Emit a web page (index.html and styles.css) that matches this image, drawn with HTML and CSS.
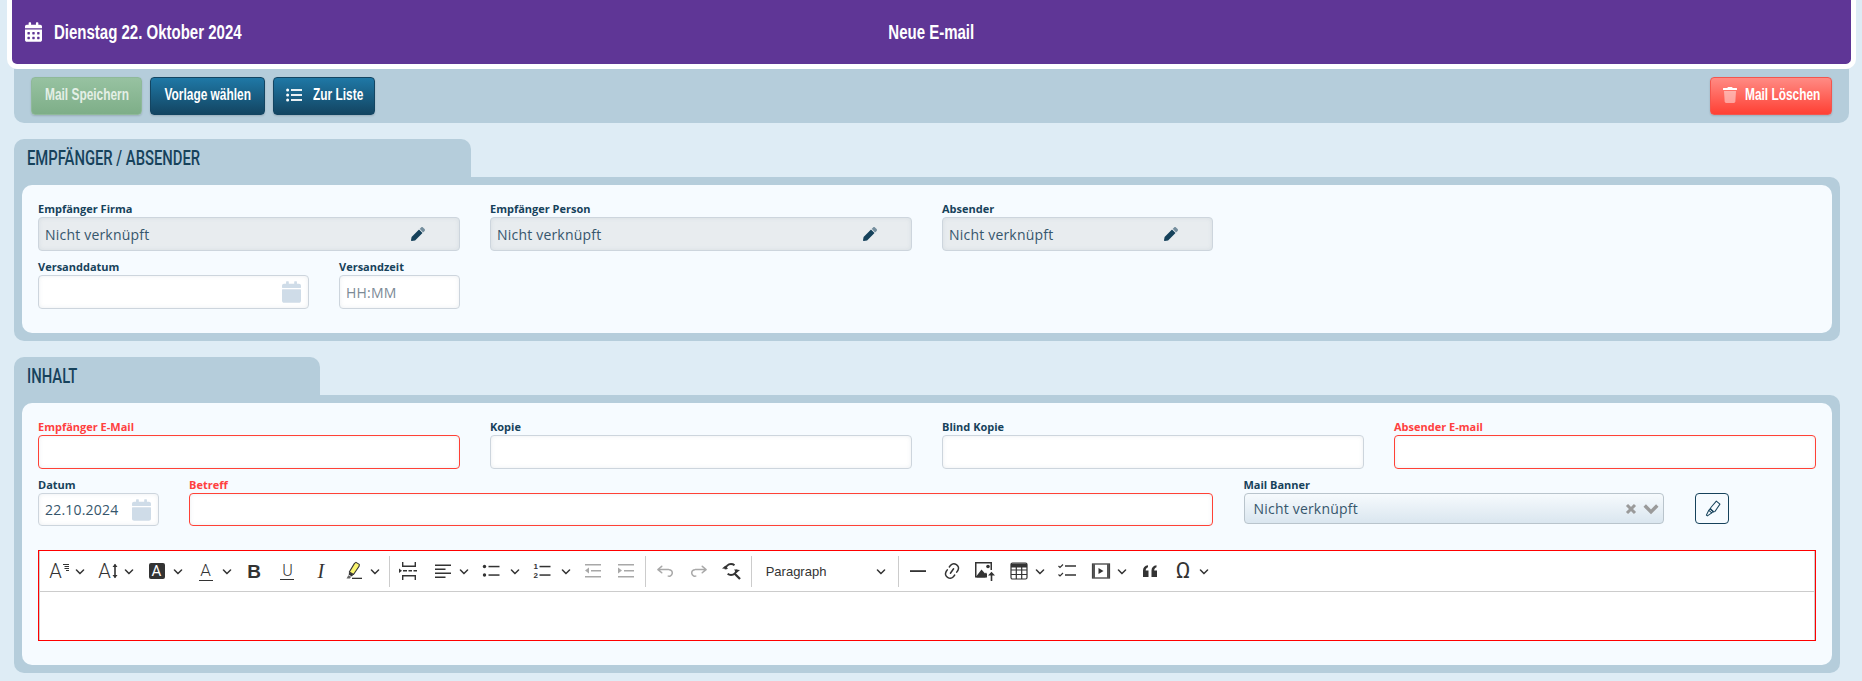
FILE: index.html
```html
<!DOCTYPE html>
<html lang="de">
<head>
    <meta charset="UTF-8">
    <meta name="viewport" content="width=device-width, initial-scale=1.0">
    <title>Neue E-mail</title>
    <link rel="stylesheet" href="styles.css">
</head>
<body>
    <svg class="defs" aria-hidden="true">
        <symbol id="i-chev" viewBox="0 0 10 10"><path d="M.941 4.523a.75.75 0 1 1 1.06-1.06l3.006 3.005 3.005-3.005a.75.75 0 1 1 1.06 1.06l-3.549 3.55a.75.75 0 0 1-1.168-.136L.941 4.523z"/></symbol>
        <symbol id="i-cal" viewBox="0 0 448 512"><path d="M12 192h424c6.6 0 12 5.4 12 12v260c0 26.5-21.5 48-48 48H48c-26.5 0-48-21.5-48-48V204c0-6.6 5.4-12 12-12zm436-44v-36c0-26.5-21.5-48-48-48h-48V12c0-6.6-5.4-12-12-12h-40c-6.6 0-12 5.4-12 12v52H160V12c0-6.6-5.4-12-12-12h-40c-6.6 0-12 5.4-12 12v52H48C21.5 64 0 85.5 0 112v36c0 6.6 5.4 12 12 12h424c6.6 0 12-5.4 12-12z"/></symbol>
        <symbol id="i-pencil" viewBox="0 0 512 512"><path d="M497.9 142.1l-46.1 46.1c-4.7 4.7-12.3 4.7-17 0l-111-111c-4.7-4.7-4.7-12.3 0-17l46.1-46.1c18.7-18.7 49.1-18.7 67.9 0l60.1 60.1c18.8 18.7 18.8 49.1 0 67.9z" opacity=".55"/><path d="M284.2 99.8L21.6 362.4.4 483.9c-2.9 16.4 11.4 30.6 27.8 27.8l121.5-21.3 262.6-262.6c4.7-4.7 4.7-12.3 0-17l-111-111c-4.8-4.7-12.4-4.7-17.1 0z"/></symbol>
    </svg>

    <header class="top-bar">
        <div class="top-date">
            <svg class="top-icon" viewBox="0 0 448 512"><path fill="currentColor" d="M0 464c0 26.5 21.5 48 48 48h352c26.5 0 48-21.5 48-48V192H0v272zm320-196c0-6.6 5.4-12 12-12h40c6.6 0 12 5.4 12 12v40c0 6.6-5.4 12-12 12h-40c-6.6 0-12-5.4-12-12v-40zm0 128c0-6.6 5.4-12 12-12h40c6.6 0 12 5.4 12 12v40c0 6.6-5.4 12-12 12h-40c-6.6 0-12-5.4-12-12v-40zM192 268c0-6.6 5.4-12 12-12h40c6.6 0 12 5.4 12 12v40c0 6.6-5.4 12-12 12h-40c-6.6 0-12-5.4-12-12v-40zm0 128c0-6.6 5.4-12 12-12h40c6.6 0 12 5.4 12 12v40c0 6.6-5.4 12-12 12h-40c-6.6 0-12-5.4-12-12v-40zM64 268c0-6.6 5.4-12 12-12h40c6.6 0 12 5.4 12 12v40c0 6.6-5.4 12-12 12H76c-6.6 0-12-5.4-12-12v-40zm0 128c0-6.6 5.4-12 12-12h40c6.6 0 12 5.4 12 12v40c0 6.6-5.4 12-12 12H76c-6.6 0-12-5.4-12-12v-40zM400 64h-48V16c0-8.8-7.2-16-16-16h-32c-8.8 0-16 7.2-16 16v48H160V16c0-8.8-7.2-16-16-16h-32c-8.8 0-16 7.2-16 16v48H48C21.5 64 0 85.5 0 112v48h448v-48c0-26.5-21.5-48-48-48z"/></svg>
            <span class="cond cond-top">Dienstag 22. Oktober 2024</span>
        </div>
        <div class="top-title"><span class="cond cond-top cond-mid">Neue E-mail</span></div>
    </header>

    <div class="page">
        <div class="action-bar">
            <button class="btn btn-save"><span class="cond cond-btn cond-mid">Mail Speichern</span></button>
            <button class="btn btn-blue btn-template"><span class="cond cond-btn cond-mid">Vorlage wählen</span></button>
            <button class="btn btn-blue btn-list">
                <svg class="btn-icon" viewBox="0 0 16 14" fill="currentColor"><circle cx="1.6" cy="2" r="1.5"/><circle cx="1.6" cy="7" r="1.5"/><circle cx="1.6" cy="12" r="1.5"/><rect x="5" y="1.1" width="11" height="1.8"/><rect x="5" y="6.1" width="11" height="1.8"/><rect x="5" y="11.1" width="11" height="1.8"/></svg>
                <span class="cond cond-btn">Zur Liste</span>
            </button>
            <button class="btn btn-red">
                <svg class="btn-icon btn-icon-trash" viewBox="0 0 448 512" fill="currentColor"><path d="M432 32H312l-9.4-18.7A24 24 0 0 0 281.1 0H166.8a23.72 23.72 0 0 0-21.4 13.3L136 32H16A16 16 0 0 0 0 48v32a16 16 0 0 0 16 16h416a16 16 0 0 0 16-16V48a16 16 0 0 0-16-16z"/><path opacity=".45" d="M53.2 467a48 48 0 0 0 47.9 45h245.8a48 48 0 0 0 47.9-45L416 128H32z"/></svg>
                <span class="cond cond-btn">Mail Löschen</span>
            </button>
        </div>

        <section class="section">
            <h2 class="tab tab-wide"><span class="cond cond-tab">EMPFÄNGER / ABSENDER</span></h2>
            <div class="panel">
                <div class="panel-inner">
                    <div class="grid-four">
                        <div class="field">
                            <label>Empfänger Firma</label>
                            <div class="input input-locked"><span class="input-text">Nicht verknüpft</span><svg class="pencil"><use href="#i-pencil"/></svg></div>
                        </div>
                        <div class="field">
                            <label>Empfänger Person</label>
                            <div class="input input-locked"><span class="input-text">Nicht verknüpft</span><svg class="pencil"><use href="#i-pencil"/></svg></div>
                        </div>
                        <div class="field field-sender">
                            <label>Absender</label>
                            <div class="input input-locked"><span class="input-text">Nicht verknüpft</span><svg class="pencil"><use href="#i-pencil"/></svg></div>
                        </div>
                    </div>
                    <div class="row-ship">
                        <div class="field">
                            <label>Versanddatum</label>
                            <div class="input"><span class="input-text"></span><svg class="cal"><use href="#i-cal"/></svg></div>
                        </div>
                        <div class="field">
                            <label>Versandzeit</label>
                            <div class="input"><span class="input-text input-hint">HH:MM</span></div>
                        </div>
                    </div>
                </div>
            </div>
        </section>

        <section class="section">
            <h2 class="tab tab-narrow"><span class="cond cond-tab">INHALT</span></h2>
            <div class="panel">
                <div class="panel-inner">
                    <div class="grid-four">
                        <div class="field field-req">
                            <label>Empfänger E-Mail</label>
                            <div class="input"></div>
                        </div>
                        <div class="field">
                            <label>Kopie</label>
                            <div class="input"></div>
                        </div>
                        <div class="field">
                            <label>Blind Kopie</label>
                            <div class="input"></div>
                        </div>
                        <div class="field field-req">
                            <label>Absender E-mail</label>
                            <div class="input"></div>
                        </div>
                    </div>
                    <div class="row-subject">
                        <div class="field field-date">
                            <label>Datum</label>
                            <div class="input input-short"><span class="input-text">22.10.2024</span><svg class="cal cal-date"><use href="#i-cal"/></svg></div>
                        </div>
                        <div class="field field-req field-subject">
                            <label>Betreff</label>
                            <div class="input input-short"></div>
                        </div>
                        <div class="field field-banner">
                            <label>Mail Banner</label>
                            <div class="select">
                                <span class="input-text">Nicht verknüpft</span>
                                <svg class="select-x" viewBox="0 0 12 12"><path d="M2 2l8 8M10 2l-8 8" stroke="currentColor" stroke-width="3" fill="none"/></svg>
                                <svg class="select-chev" viewBox="0 0 14 10"><path d="M1.5 2l5.5 5.5L12.5 2" stroke="currentColor" stroke-width="3" fill="none"/></svg>
                            </div>
                        </div>
                        <button class="pen-btn">
                            <svg viewBox="0 0 16 16" fill="none" stroke="currentColor" stroke-width=".95" stroke-linejoin="round"><path d="M11.6 1l3.4 2.900-4.600 6.800-1.400.6-2.900-2.500.2-1.500z"/><path d="M5.900 8.100l2.900 2.500-1.500 1.500-2.800-2.400z"/><path d="M4.500 9.700L2.200 14.300l1 .7 4.100-2.900"/></svg>
                        </button>
                    </div>

                    <div class="editor">
                        <div class="ed-toolbar">
                            <span class="tb tb-dd">
                                <span class="glyph-box"><span class="glyph glyph-a">A</span><svg class="glyph-lines" viewBox="0 0 7 7"><path d="M1 .5h6M2.500 2.500h4.500M2.500 4.500h4.500M4 6.500h3" stroke="#333" stroke-width="1"/></svg></span>
                                <svg class="chev"><use href="#i-chev"/></svg>
                            </span>
                            <span class="tb tb-dd">
                                <span class="glyph-box"><span class="glyph glyph-a">A</span><svg class="glyph-arrow" viewBox="0 0 6 16"><path d="M3 1.500v13" stroke="#333" stroke-width="1.600"/><path d="M0.500 4L3 0.800 5.500 4zM0.500 12L3 15.200 5.500 12z" fill="#333"/></svg></span>
                                <svg class="chev"><use href="#i-chev"/></svg>
                            </span>
                            <span class="tb tb-dd">
                                <span class="glyph glyph-fill">A</span>
                                <svg class="chev"><use href="#i-chev"/></svg>
                            </span>
                            <span class="tb tb-dd">
                                <span class="glyph glyph-under">A</span>
                                <svg class="chev"><use href="#i-chev"/></svg>
                            </span>
                            <span class="tb"><span class="glyph glyph-bold">B</span></span>
                            <span class="tb"><span class="glyph glyph-u">U</span></span>
                            <span class="tb"><span class="glyph glyph-i">I</span></span>
                            <span class="tb tb-dd">
                                <svg class="ico" viewBox="0 0 20 20"><path d="M9.500 13.500L5.300 11l5.200-8.600 1.500-1 3.300 2-.2 1.800z" fill="#f9f46e" stroke="#333" stroke-width="1.100" stroke-linejoin="round"/><path d="M5.200 11.200l4.200 2.500-1.600 1.700-3.200-1.900z" fill="#333"/><path d="M4.400 14.200L2.500 17.500l3.400.1 1.200-1.800z" fill="#666"/><rect x="8" y="16.700" width="10" height="1.300" fill="#333"/></svg>
                                <svg class="chev"><use href="#i-chev"/></svg>
                            </span>
                            <span class="tb-sep"></span>
                            <span class="tb">
                                <svg class="ico" viewBox="0 0 20 20" fill="#333"><path d="M3 1v5h14V1h-1.400v3.600H4.400V1zM3 19v-5h14v5h-1.400v-3.600H4.400V19z"/><path d="M4 9h4v1.400H4zm5.500 0h3.500v1.400H9.500zm5 0h3.500v1.400h-3.500zM0 7.500l3 2.300-3 2.300z"/></svg>
                            </span>
                            <span class="tb tb-dd tb-wide">
                                <svg class="ico" viewBox="0 0 20 20" fill="#333"><rect x="2" y="3.500" width="16" height="1.500"/><rect x="2" y="7.500" width="10.500" height="1.500"/><rect x="2" y="11.500" width="16" height="1.500"/><rect x="2" y="15.500" width="10.500" height="1.500"/></svg>
                                <svg class="chev"><use href="#i-chev"/></svg>
                            </span>
                            <span class="tb tb-dd tb-split">
                                <svg class="ico" viewBox="0 0 20 20" fill="#333"><circle cx="3.500" cy="5.500" r="1.700"/><circle cx="3.500" cy="14" r="1.700"/><rect x="7.500" y="4.800" width="11" height="1.500"/><rect x="7.500" y="13.300" width="11" height="1.500"/></svg>
                                <svg class="chev"><use href="#i-chev"/></svg>
                            </span>
                            <span class="tb tb-dd tb-split">
                                <svg class="ico" viewBox="0 0 20 20" fill="#333"><text x="1.500" y="7.500" class="ico-digit">1</text><text x="1.500" y="17" class="ico-digit">2</text><rect x="7.500" y="4.800" width="11" height="1.500"/><rect x="7.500" y="13.300" width="11" height="1.500"/></svg>
                                <svg class="chev"><use href="#i-chev"/></svg>
                            </span>
                            <span class="tb tb-off">
                                <svg class="ico" viewBox="0 0 20 20" fill="#333"><rect x="2" y="3" width="16" height="1.500"/><rect x="8" y="9" width="10" height="1.500"/><rect x="2" y="15" width="16" height="1.500"/><path d="M6 6.500v6L2 9.500z"/></svg>
                            </span>
                            <span class="tb tb-off">
                                <svg class="ico" viewBox="0 0 20 20" fill="#333"><rect x="2" y="3" width="16" height="1.500"/><rect x="8" y="9" width="10" height="1.500"/><rect x="2" y="15" width="16" height="1.500"/><path d="M2 6.500v6l4-3z"/></svg>
                            </span>
                            <span class="tb-sep"></span>
                            <span class="tb tb-off">
                                <svg class="ico" viewBox="0 0 20 20" fill="#333"><path d="m5.042 9.367 2.189 1.837a.75.75 0 0 1-.965 1.149l-3.788-3.18a.747.747 0 0 1-.21-.284.75.75 0 0 1 .17-.945L6.23 4.762a.75.75 0 1 1 .964 1.15L4.863 7.867h8.917A.75.75 0 0 1 14 7.9a4 4 0 1 1-1.477 7.718l.344-1.489a2.5 2.5 0 1 0 1.094-4.730l.008-.032H5.042z"/></svg>
                            </span>
                            <span class="tb tb-off">
                                <svg class="ico" viewBox="0 0 20 20" fill="#333"><path d="m14.958 9.367-2.189 1.837a.75.75 0 0 0 .965 1.149l3.788-3.180a.747.747 0 0 0 .21-.284.75.75 0 0 0-.17-.945L13.770 4.762a.75.75 0 1 0-.964 1.150l2.331 1.955H6.220A.75.75 0 0 0 6 7.900a4 4 0 1 0 1.477 7.718l-.344-1.489A2.500 2.500 0 1 1 6.039 9.400l-.008-.032h8.927z"/></svg>
                            </span>
                            <span class="tb">
                                <svg class="ico" viewBox="0 0 20 20"><circle cx="9" cy="8.500" r="5.500" fill="none" stroke="#333" stroke-width="1.900" stroke-dasharray="12 5"/><path d="M12.500 12.500l5.500 5.500" stroke="#333" stroke-width="2.300"/><path d="M0 7.500l3.500-3 2.500 3.500zM18 9l-3.500 3-2.500-3.500z" fill="#333"/></svg>
                            </span>
                            <span class="tb-sep"></span>
                            <span class="tb tb-para">
                                <span class="para-text">Paragraph</span>
                                <svg class="chev"><use href="#i-chev"/></svg>
                            </span>
                            <span class="tb-sep"></span>
                            <span class="tb">
                                <svg class="ico" viewBox="0 0 20 20" fill="#333"><rect x="2" y="9.200" width="16" height="1.800"/></svg>
                            </span>
                            <span class="tb">
                                <svg class="ico" viewBox="0 0 20 20" fill="#333"><path d="m11.077 15 .991-1.416a.75.75 0 1 1 1.229.86l-1.148 1.64a.748.748 0 0 1-.217.206 5.251 5.251 0 0 1-8.503-5.955.741.741 0 0 1 .12-.274l1.147-1.639a.75.75 0 1 1 1.228.86L4.933 10.700l.006.003a3.750 3.750 0 0 0 6.132 4.294l.006.004zm5.494-5.335a.748.748 0 0 1-.12.274l-1.147 1.639a.75.75 0 1 1-1.228-.86l.86-1.230a3.750 3.750 0 0 0-6.144-4.301l-.86 1.229a.75.75 0 0 1-1.229-.86l1.148-1.640a.748.748 0 0 1 .217-.206 5.251 5.251 0 0 1 8.503 5.955zm-4.563-2.532a.75.75 0 0 1 .184 1.045l-3.155 4.505a.75.75 0 1 1-1.229-.86l3.155-4.506a.75.75 0 0 1 1.045-.184z"/></svg>
                            </span>
                            <span class="tb">
                                <svg class="ico" viewBox="0 0 20 20" fill="#333"><path d="M0 1h17v8h-1.500V2.500H1.500v12.500h9v1.500H0z"/><path d="M1.500 15l5-6.500 3.500 4 1-1 1 1.500v3.500h-10.500z"/><circle cx="13" cy="5.500" r="1.800"/><path d="M15.700 20v-6h1.600v6zM13 14.500l3.500-3.800 3.500 3.800z"/></svg>
                            </span>
                            <span class="tb tb-dd">
                                <svg class="ico" viewBox="0 0 20 20" fill="none" stroke="#333" stroke-width="1.200"><rect x="2" y="2" width="16" height="16" rx="1.500"/><path d="M2 4.500h16" stroke-width="4"/><path d="M2 9h16M2 13.500h16M7.300 6v12M12.700 6v12"/></svg>
                                <svg class="chev"><use href="#i-chev"/></svg>
                            </span>
                            <span class="tb">
                                <svg class="ico" viewBox="0 0 20 20" fill="none" stroke="#333"><path d="M1.500 5l1.500 1.500L6 3.500M1.500 13.500L3 15l3-3" stroke-width="1.200"/><path d="M8 5h11M8 14h11" stroke-width="1.500"/></svg>
                            </span>
                            <span class="tb tb-dd">
                                <svg class="ico" viewBox="0 0 20 20"><rect x="1.500" y="3" width="17" height="14" fill="none" stroke="#333" stroke-width="1.200"/><path d="M1.500 3h2.500v14H1.500zM16 3h2.500v14H16z" fill="#555"/><path d="M7.500 7v6l5-3z" fill="#333"/></svg>
                                <svg class="chev"><use href="#i-chev"/></svg>
                            </span>
                            <span class="tb">
                                <svg class="ico" viewBox="0 0 20 20" fill="#333"><path d="M3 9.500C3 6.500 4.800 4.800 8 4.300v2C6.500 6.800 5.800 7.800 5.700 9.500H8.500V16H3zM11.500 9.500c0-3 1.800-4.700 5-5.200v2c-1.500.5-2.200 1.500-2.300 3.200H17V16h-5.500z"/></svg>
                            </span>
                            <span class="tb tb-dd">
                                <span class="glyph glyph-omega">Ω</span>
                                <svg class="chev"><use href="#i-chev"/></svg>
                            </span>
                        </div>
                        <div class="ed-body"></div>
                    </div>
                </div>
            </div>
        </section>
    </div>
</body>
</html>
```

FILE: styles.css
```css
:root {
    --bg: #deecf5;
    --frame: #b5cddb;
    --inner: #f6fbff;
    --navy: #16425b;
    --purple: #5f3696;
    --red: #ff4040;
}

*,
*::before,
*::after {
    margin: 0;
    padding: 0;
    box-sizing: border-box;
}

html,
body {
    height: 681px;
    overflow: hidden;
}

body {
    background-color: var(--bg);
    font-family: "Open Sans", sans-serif;
    color: var(--navy);
}

.defs {
    display: none;
}

/* no condensed family is installed, so squeeze the heading font */
.cond {
    display: inline-block;
    font-family: "Liberation Sans", sans-serif;
    font-weight: 700;
    white-space: nowrap;
    transform-origin: left center;
}

.cond-mid {
    transform-origin: center center;
}

.cond-top {
    font-size: 20px;
    transform: scaleX(0.75);
}

.cond-btn {
    font-size: 17px;
    transform: scaleX(0.7);
}

.cond-tab {
    font-family: Roboto, sans-serif;
    font-size: 20px;
    font-weight: 500;
    transform: scaleX(0.74);
}

/* top bar */
.top-bar {
    display: grid;
    grid-template-columns: 1fr auto 1fr;
    align-items: center;
    height: 69px;
    margin: 0 6px 0 7px;
    padding: 0 13px;
    background-color: var(--purple);
    border: 5px solid #fff;
    border-top: none;
    border-radius: 0 0 10px 10px;
    color: #fff;
}

.top-date {
    display: flex;
    align-items: center;
    gap: 12px;
}

.top-icon {
    width: 17px;
    height: 20px;
}

.page {
    padding-left: 14px;
}

/* action bar */
.action-bar {
    display: flex;
    gap: 8px;
    width: 1835px;
    padding: 8px 17px;
    background-color: var(--frame);
    border-radius: 0 0 10px 10px;
}

.btn {
    display: flex;
    align-items: center;
    justify-content: center;
    height: 38px;
    padding-bottom: 2px;
    border-radius: 4px;
    color: #fff;
    border: 1px solid #134562;
    box-shadow: 0 1px 2px rgba(0, 0, 0, 0.15);
}

.btn-blue {
    background: linear-gradient(#1f78a6, #134562);
}

.btn-template {
    width: 115px;
}

.btn-list {
    justify-content: flex-start;
    gap: 11px;
    width: 102px;
    padding-left: 12px;
}

.btn-save {
    width: 111px;
    background: linear-gradient(#97c2a1, #7eae88);
    border-color: #8fb99a;
    color: #e4efe6;
}

.btn-red {
    justify-content: flex-start;
    gap: 8px;
    width: 122px;
    margin-left: auto;
    padding-left: 12px;
    background: linear-gradient(#ff8b84, #ff4034);
    border-color: #f2564e;
}

.btn-icon {
    width: 16px;
    height: 14px;
    flex-shrink: 0;
}

.btn-icon-trash {
    width: 14px;
    height: 16px;
}

/* sections */
.section {
    margin-top: 16px;
    width: 1826px;
}

.tab {
    height: 38px;
    padding: 5px 0 0 13px;
    background-color: var(--frame);
    border-radius: 10px 10px 0 0;
    color: var(--navy);
    font-size: 20px;
}

.tab-wide {
    width: 457px;
}

.tab-narrow {
    width: 306px;
}

.panel {
    padding: 8px;
    background-color: var(--frame);
    border-radius: 0 10px 10px 10px;
}

.panel-inner {
    padding: 18px 16px 24px;
    background-color: var(--inner);
    border-radius: 10px;
}

.grid-four {
    display: grid;
    grid-template-columns: repeat(4, 422px);
    column-gap: 30px;
}

.field-sender {
    width: 271px;
}

.row-ship {
    display: grid;
    grid-template-columns: 271px 121px;
    column-gap: 30px;
    margin-top: 10px;
}

.row-subject {
    display: flex;
    margin-top: 10px;
}

/* fields */
.field label {
    display: block;
    height: 14px;
    font-size: 11px;
    font-weight: 700;
    line-height: 12px;
    color: var(--navy);
}

.field-req label {
    color: var(--red);
}

.input {
    display: flex;
    align-items: center;
    height: 34px;
    padding: 0 7px 0 6px;
    background-color: #fff;
    border: 1px solid #cdd5dd;
    border-radius: 4px;
    box-shadow: inset 0 0 4px rgba(120, 140, 160, 0.15);
}

.input-short {
    height: 33px;
}

.field-req .input {
    border-color: #ff4136;
}

.input-locked {
    background-color: #e8ecef;
}

.input-text {
    flex: 1;
    font-size: 14px;
    letter-spacing: 0.2px;
    color: #36566c;
}

.input-hint {
    color: #7c8a96;
}

.pencil {
    width: 14px;
    height: 14px;
    margin-right: 27px;
    fill: var(--navy);
}

.cal {
    width: 19px;
    height: 22px;
    fill: #cfdce8;
}

.field-date {
    width: 121px;
}

.cal-date {
    margin-left: -2px;
}

.field-subject {
    width: 1024px;
    margin-left: 30px;
}

.field-banner {
    width: 420.5px;
    margin-left: 30.5px;
}

.select {
    display: flex;
    align-items: center;
    height: 31px;
    padding: 0 4px 0 9px;
    background: linear-gradient(#f6fafd, #dae6ef);
    border: 1px solid #b9c4cc;
    border-radius: 4px;
}

.select-x {
    width: 12px;
    height: 12px;
    margin-right: 6px;
    color: #9a9a9a;
}

.select-chev {
    width: 16px;
    height: 12px;
    color: #9a9a9a;
}

.pen-btn {
    display: flex;
    align-items: center;
    justify-content: center;
    width: 34px;
    height: 31px;
    margin: 14px 0 0 31px;
    background-color: #f6fbff;
    border: 1px solid var(--navy);
    border-radius: 4px;
    color: var(--navy);
}

.pen-btn svg {
    width: 17px;
    height: 17px;
}

/* editor */
.editor {
    display: flex;
    flex-direction: column;
    height: 91px;
    margin-top: 24px;
    background-color: #fff;
    border: 1px solid #f00;
}

.ed-toolbar {
    display: flex;
    align-items: center;
    flex-shrink: 0;
    height: 41px;
    padding-left: 1.5px;
    border-left: 1px solid #ccc;
    border-right: 1px solid #ccc;
    border-bottom: 1px solid #ccc;
    color: #333;
}

.ed-body {
    flex: 1;
    border-left: 1px solid #ccc;
    border-right: 1px solid #ccc;
}

.tb {
    display: flex;
    align-items: center;
    justify-content: center;
    flex-shrink: 0;
    width: 33.3px;
    height: 30px;
}

.tb-dd {
    justify-content: flex-start;
    gap: 6px;
    width: 49px;
    padding-left: 7px;
}

.tb-wide {
    width: 48.5px;
}

.tb-split {
    width: 51px;
    gap: 9px;
}

.tb-off {
    opacity: 0.42;
}

.tb-para {
    justify-content: space-between;
    width: 141px;
    padding: 0 10px 0 11px;
}

.para-text {
    font-family: "Liberation Sans", sans-serif;
    font-size: 13px;
    color: #333;
}

.tb-sep {
    flex-shrink: 0;
    width: 1px;
    height: 31px;
    margin: 0 2.5px;
    background-color: #ccc;
}

.ico {
    flex-shrink: 0;
    width: 20px;
    height: 20px;
}

.ico-digit {
    font-family: "Liberation Sans", sans-serif;
    font-size: 8px;
    font-weight: 700;
}

.chev {
    flex-shrink: 0;
    width: 10px;
    height: 10px;
    fill: #333;
}

/* letter shaped toolbar icons stay real text */
.glyph {
    display: flex;
    align-items: center;
    justify-content: center;
    flex-shrink: 0;
    width: 20px;
    height: 20px;
    font-family: Roboto, sans-serif;
    font-weight: 300;
    line-height: 1;
    color: #333;
}

.glyph-box {
    display: flex;
    align-items: center;
    flex-shrink: 0;
    position: relative;
    width: 20px;
    height: 20px;
}

.glyph-a {
    width: 14px;
    font-size: 20px;
}

.glyph-lines {
    position: absolute;
    right: 0;
    top: 3px;
    width: 7px;
    height: 7px;
}

.glyph-arrow {
    position: absolute;
    right: 0;
    top: 2px;
    width: 6px;
    height: 16px;
}

.glyph-fill {
    width: 16px;
    height: 16px;
    margin: 0 2px;
    background-color: #333;
    border-radius: 2px;
    color: #fff;
    font-size: 15px;
    font-weight: 400;
}

.glyph-under {
    width: 14px;
    height: 19px;
    margin: 0 3px;
    border-bottom: 1.5px solid #333;
    font-size: 17px;
}

.glyph-bold {
    font-family: "Liberation Sans", sans-serif;
    font-size: 19px;
    font-weight: 700;
}

.glyph-u {
    width: 14px;
    height: 17px;
    border-bottom: 1.5px solid #333;
    font-size: 16px;
}

.glyph-i {
    font-family: "Liberation Serif", serif;
    font-size: 20px;
    font-style: italic;
    font-weight: 400;
}

.glyph-omega {
    font-size: 22px;
    font-weight: 400;
}
```
